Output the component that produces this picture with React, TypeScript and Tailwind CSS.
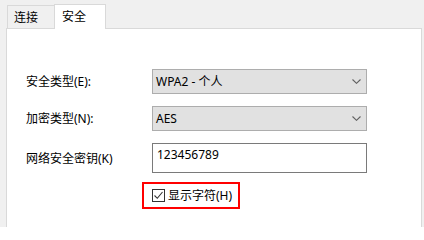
const font = { fontFamily: '"Noto Sans", "Noto Sans CJK SC", sans-serif' };

function Chevron() {
  return (
    <svg width="9" height="5" viewBox="0 0 9 5" className="shrink-0">
      <path d="M0.5 0.5 L4.5 4.3 L8.5 0.5" fill="none" stroke="#606060" strokeWidth="1.1" />
    </svg>
  );
}

function Combo({ value }: { value: string }) {
  return (
    <div className="flex h-[25px] w-[215px] items-center justify-between border border-[#adadad] bg-[#e1e1e1] pl-[3px] pr-[5px]">
      <span className="text-[12px] leading-none text-black">{value}</span>
      <Chevron />
    </div>
  );
}

function Label({ text }: { text: string }) {
  return <span className="text-[12px] leading-none text-black">{text}</span>;
}

export default function App() {
  return (
    <div className="h-[227px] w-[424px] overflow-hidden bg-[#f0f0f0]" style={font}>
      {/* tab strip */}
      <div className="flex items-end pl-[7px] pt-[4px]">
        <div className="flex h-[23px] w-[48px] items-center border border-b-0 border-[#d9d9d9] bg-[#f0f0f0] pl-[6px] pt-[1px] text-[12px] text-black">
          连接
        </div>
        <div className="relative z-10 -mb-px -ml-px flex h-[25px] w-[52px] items-start border border-b-0 border-[#d9d9d9] bg-white pl-[7px] pt-[3px] text-[12px] text-black">
          安全
        </div>
      </div>

      {/* panel */}
      <div className="ml-[6px] h-[240px] w-[416px] border border-[#d9d9d9] bg-white pl-[19px] pt-[40px]">
        <div className="grid grid-cols-[126px_215px] items-center gap-y-[12px]">
          <Label text="安全类型(E):" />
          <Combo value="WPA2 - 个人" />

          <Label text="加密类型(N):" />
          <Combo value="AES" />

          <div className="-mt-[3px]">
            <Label text="网络安全密钥(K)" />
          </div>
          <div className="flex h-[30px] w-[215px] items-start border border-[#7a7a7a] bg-white pl-[4px] pt-[5px]">
            <span className="text-[12px] leading-none text-black">123456789</span>
          </div>

          <div />
          <div className="-ml-[10px] -mt-[3px]">
            <div className="flex h-[27px] w-[98px] items-center gap-[3px] border-2 border-[#ff0000] pl-[8px]">
              <span className="flex h-[13px] w-[13px] items-center justify-center border border-[#333333] bg-white">
                <svg width="11" height="11" viewBox="0 0 11 11">
                  <path d="M1.5 5.5 L4.3 8.3 L9.5 2" fill="none" stroke="#333333" strokeWidth="1.1" />
                </svg>
              </span>
              <span className="text-[12px] leading-none text-black">显示字符(H)</span>
            </div>
          </div>
        </div>
      </div>
    </div>
  );
}
